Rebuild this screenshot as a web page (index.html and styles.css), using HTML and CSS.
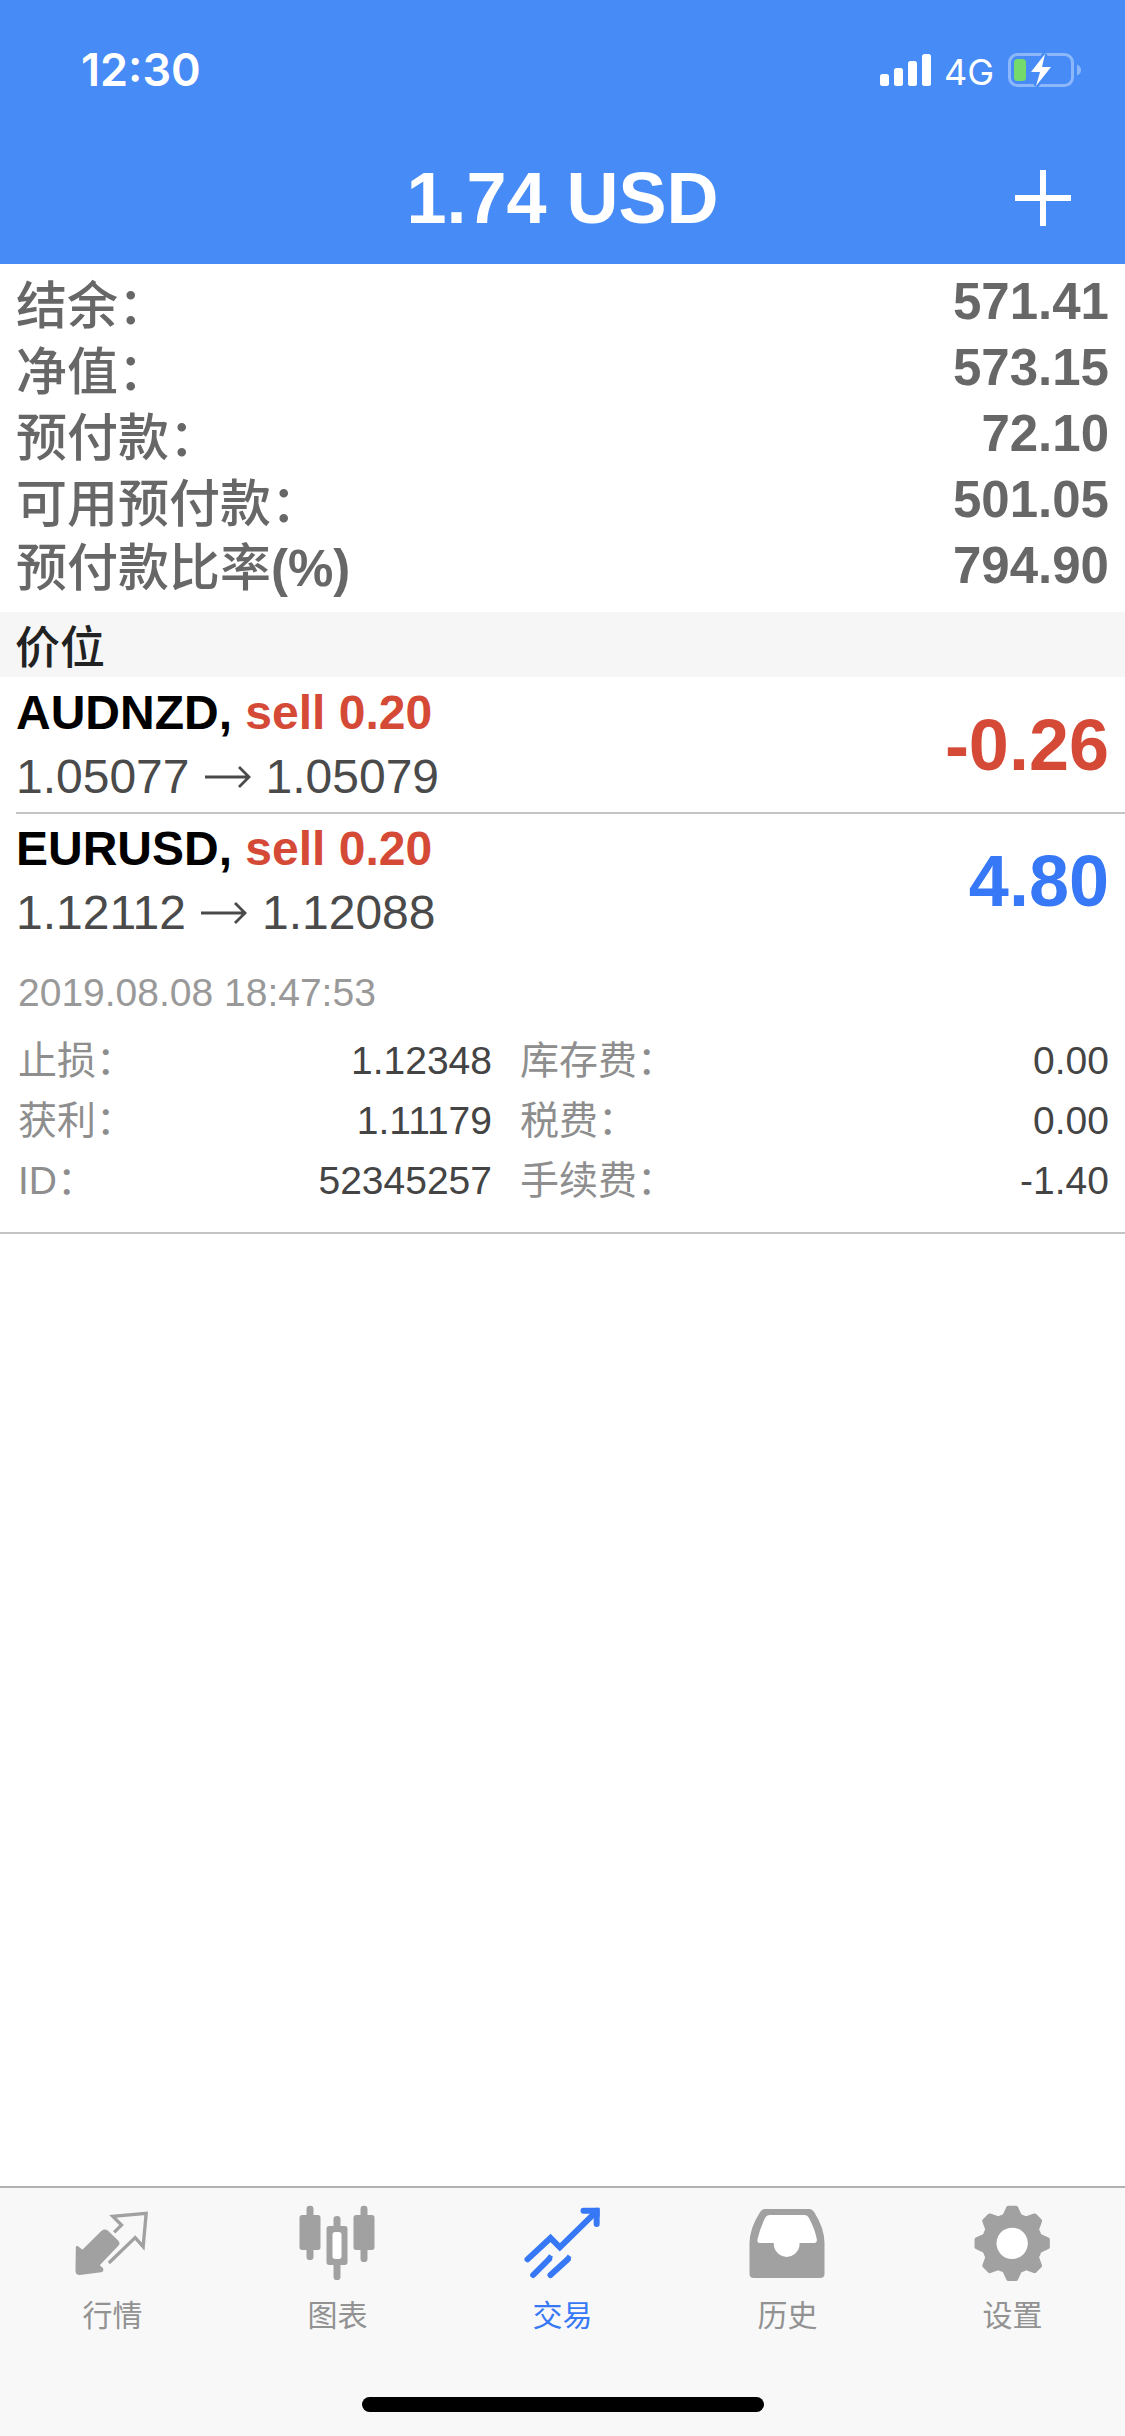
FILE: index.html
```
<!DOCTYPE html>
<html lang="zh-CN">
<head>
<meta charset="utf-8">
<title>交易</title>
<link rel="stylesheet" href="styles.css">
</head>
<body>
<div class="app">
  <header class="header">
    <div class="status">
      <span class="clock">12:30</span>
      <div class="status-right">
        <svg class="signal" width="51" height="32" viewBox="0 0 51 32" fill="#fff"><rect x="0" y="20" width="9" height="12" rx="2.5"/><rect x="14" y="14" width="9" height="18" rx="2.5"/><rect x="28" y="7" width="9" height="25" rx="2.5"/><rect x="42" y="0" width="9" height="32" rx="2.5"/></svg>
        <span class="network">4G</span>
        <svg class="battery" width="74" height="34" viewBox="0 0 74 34"><rect x="1.5" y="1.5" width="63" height="31" rx="8" fill="none" stroke="#8cb8fb" stroke-width="3"/><path d="M69 11.5q4 1.500 4 5.500t-4 5.500z" fill="#8cb8fb"/><rect x="6" y="6" width="12" height="22" rx="3.500" fill="#74da6c"/><path d="M37 1 23 19h9l-4 14 15-19H34z" fill="#fff" stroke="#478bf6" stroke-width="5" paint-order="stroke"/></svg>
      </div>
    </div>
    <div class="nav">
      <h1 class="title narrow">1.74 USD</h1>
      <svg class="plus" width="56" height="56" viewBox="0 0 56 56" stroke="#fff" stroke-width="6"><path d="M28 0v56M0 28h56"/></svg>
    </div>
  </header>

  <section class="summary">
    <div class="sum-row"><span class="label">结余<i class="colon">：</i></span><b class="narrow">571.41</b></div>
    <div class="sum-row"><span class="label">净值<i class="colon">：</i></span><b class="narrow">573.15</b></div>
    <div class="sum-row"><span class="label">预付款<i class="colon">：</i></span><b class="narrow">72.10</b></div>
    <div class="sum-row"><span class="label">可用预付款<i class="colon">：</i></span><b class="narrow">501.05</b></div>
    <div class="sum-row"><span class="label">预付款比率<span class="narrow">(%)</span></span><b class="narrow">794.90</b></div>
  </section>

  <h2 class="section">价位</h2>

  <article class="position">
    <div class="info">
      <div class="symbol narrow">AUDNZD, <span class="sell">sell 0.20</span></div>
      <div class="prices">1.05077<svg class="arrow" width="48" height="22" viewBox="0 0 48 22" fill="none" stroke="#4a4a4a" stroke-width="2.800"><path d="M1 11h44M35 1l10 10-10 10"/></svg>1.05079</div>
    </div>
    <div class="profit loss narrow">-0.26</div>
  </article>
  <article class="position">
    <div class="info">
      <div class="symbol narrow">EURUSD, <span class="sell">sell 0.20</span></div>
      <div class="prices">1.12112<svg class="arrow" width="48" height="22" viewBox="0 0 48 22" fill="none" stroke="#4a4a4a" stroke-width="2.800"><path d="M1 11h44M35 1l10 10-10 10"/></svg>1.12088</div>
    </div>
    <div class="profit gain narrow">4.80</div>
  </article>
  <section class="details">
    <div class="date">2019.08.08 18:47:53</div>
    <div class="grid">
      <span class="key">止损<i class="colon">：</i></span><span class="val">1.12348</span><span class="key">库存费<i class="colon">：</i></span><span class="val">0.00</span>
      <span class="key">获利<i class="colon">：</i></span><span class="val">1.11179</span><span class="key">税费<i class="colon">：</i></span><span class="val">0.00</span>
      <span class="key">ID<i class="colon">：</i></span><span class="val">52345257</span><span class="key">手续费<i class="colon">：</i></span><span class="val">-1.40</span>
    </div>
  </section>

  <nav class="tabbar">
    <div class="tabs">
      <div class="tab">
        <svg width="80" height="80" viewBox="217.5 69 240 240"><path d="M230 202 246 214 306 155Q312 150 319 154L350 184Q356 190 350 195L292 256 304 266Q306 271 301 273L238 281Q229 281 229 273Z" fill="#a1a1a1" stroke="#a1a1a1" stroke-width="8" stroke-linejoin="round"/><path d="M341 157 363 135 337 109 437 100 428 200 404 173 325 249" fill="none" stroke="#a1a1a1" stroke-width="10"/></svg>
        <span>行情</span>
      </div>
      <div class="tab">
        <svg width="80" height="80" viewBox="892.5 69 240 240" fill="#a1a1a1"><rect x="918" y="77" width="21" height="163" rx="10"/><rect x="897" y="105" width="63" height="105" rx="8"/><rect x="1080" y="77" width="21" height="169" rx="10"/><rect x="1059" y="105" width="63" height="105" rx="8"/><rect x="999" y="108" width="21" height="192" rx="10"/><rect x="978" y="138" width="63" height="117" rx="8"/><rect x="996" y="156" width="27" height="81" rx="8" fill="#fff"/></svg>
        <span>图表</span>
      </div>
      <div class="tab active">
        <svg width="80" height="80" viewBox="367.5 69 240 240" fill="none" stroke="#3678f5" stroke-width="18" stroke-linecap="round"><path d="M381 238 450 174 478 202 585 97"/><path d="M549 92.500H588.500V132"/><path d="M588 83H592Q597.500 83 597.500 90V110H570V90Z" fill="#3678f5" stroke="none"/><path d="M398 285 446 237M450 285 502 238"/><path d="M440 230 452 238M496 231 507 239" stroke-linecap="butt" stroke-width="13" transform="translate(2 -2)"/></svg>
        <span>交易</span>
      </div>
      <div class="tab">
        <svg width="80" height="80" viewBox="67.500 69 240 240"><path d="M118 87H252Q260 87 266 96 297 145 297 190V281Q297 294 284 294H85Q72 294 72 281V190Q72 145 104 96 110 87 118 87Z" fill="#a1a1a1"/><path d="M132 105H238Q246 105 250 113 269 148 274 178 275 189 266 189H222V198A39 39 0 0 1 145 198V189H102Q94 189 96 178 102 148 119 113 123 105 132 105Z" fill="#fff"/></svg>
        <span>历史</span>
      </div>
      <div class="tab">
        <svg width="80" height="80" viewBox="742.500 69 240 240"><g fill="#a1a1a1" stroke="#a1a1a1" stroke-width="14" stroke-linejoin="round"><circle cx="860" cy="190" r="84"/><path id="teeth" d="M849 84H871L884 112V268L871 296H849L836 268V112Z"/><use href="#teeth" transform="rotate(45 860 190)"/><use href="#teeth" transform="rotate(90 860 190)"/><use href="#teeth" transform="rotate(135 860 190)"/></g><circle cx="860" cy="190" r="47" fill="#fff"/></svg>
        <span>设置</span>
      </div>
    </div>
    <div class="home"></div>
  </nav>
</div>
</body>
</html>
```
FILE: styles.css
```
* { box-sizing: border-box; }
body { margin: 0; background: #fff; }
h1, h2 { margin: 0; font-weight: normal; }
i { font-style: normal; }
svg { display: block; flex: none; }

.app {
  width: 1125px;
  height: 2436px;
  display: flex;
  flex-direction: column;
  background: #fff;
  font-family: "Liberation Sans", "Noto Sans CJK SC", sans-serif;
  white-space: nowrap;
  overflow: hidden;
}
.narrow {
  font-family: "Liberation Sans Narrow", "Liberation Sans", "Noto Sans CJK SC", sans-serif;
  font-weight: 700;
}

/* Header */
.header { height: 264px; background: #478bf6; color: #fff; }
.status {
  height: 132px;
  padding: 8px 43px 0 81px;
  display: flex;
  align-items: center;
  justify-content: space-between;
}
.clock { font: 600 45px/60px Inter, sans-serif; }
.status-right { display: flex; align-items: center; }
.network { font: 400 36px/44px Inter, sans-serif; margin: 4px 14px 0 13px; }
.nav {
  height: 132px;
  padding: 0 54px;
  display: grid;
  grid-template-columns: 56px 1fr 56px;
  align-items: center;
}
.title { grid-column: 2; text-align: center; font-size: 72px; line-height: 80px; }

/* Account summary */
.summary { height: 348px; padding: 5px 16px 0; color: #676767; }
.sum-row {
  height: 66px;
  display: flex;
  align-items: center;
  justify-content: space-between;
  font-size: 51px;
  line-height: 66px;
}
.label { font-family: "Noto Sans CJK SC", sans-serif; font-weight: 500; }

.section {
  height: 65px;
  padding: 0 15px;
  background: #f6f6f6;
  color: #222;
  font: 500 45px/65px "Noto Sans CJK SC", sans-serif;
}

/* Open positions */
.position {
  height: 135px;
  margin-left: 16px;
  padding-right: 16px;
  display: flex;
  justify-content: space-between;
  align-items: center;
}
.position + .position { border-top: 2px solid #c4c4c6; }
.symbol { font-size: 48px; line-height: 64px; color: #000; }
.sell { color: #d54a37; }
.prices {
  display: flex;
  align-items: center;
  font-size: 48px;
  line-height: 64px;
  color: #4a4a4a;
}
.arrow { margin: 0 14px; }
.profit { font-size: 72px; line-height: 80px; }
.loss { color: #d54a37; }
.gain { color: #3678f5; }

/* Expanded position */
.details {
  height: 287px;
  padding: 16px 16px 0 18px;
  border-bottom: 2px solid #c4c4c6;
  font-size: 39px;
}
.date { line-height: 60px; color: #999; }
.grid {
  margin-top: 8px;
  display: grid;
  grid-template-columns: 236px 238px 300px 1fr;
  grid-auto-rows: 60px;
  line-height: 60px;
}
.key { color: #8e8e8e; }
.key:nth-child(4n+3) { padding-left: 28px; }
.val { color: #444; text-align: right; }

/* Tab bar */
.tabbar {
  margin-top: auto;
  height: 250px;
  background: #f8f8f8;
  border-top: 2px solid #b2b2b2;
  display: flex;
  flex-direction: column;
  align-items: center;
  justify-content: space-between;
  padding: 15px 0 24px;
}
.tabs { width: 100%; display: grid; grid-template-columns: repeat(5, 225px); }
.tab {
  display: flex;
  flex-direction: column;
  align-items: center;
  gap: 8px;
  color: #929292;
  font: 400 30px/44px "Noto Sans CJK SC", sans-serif;
}
.active { color: #3678f5; }
.home { width: 402px; height: 15px; border-radius: 8px; background: #000; }
```
